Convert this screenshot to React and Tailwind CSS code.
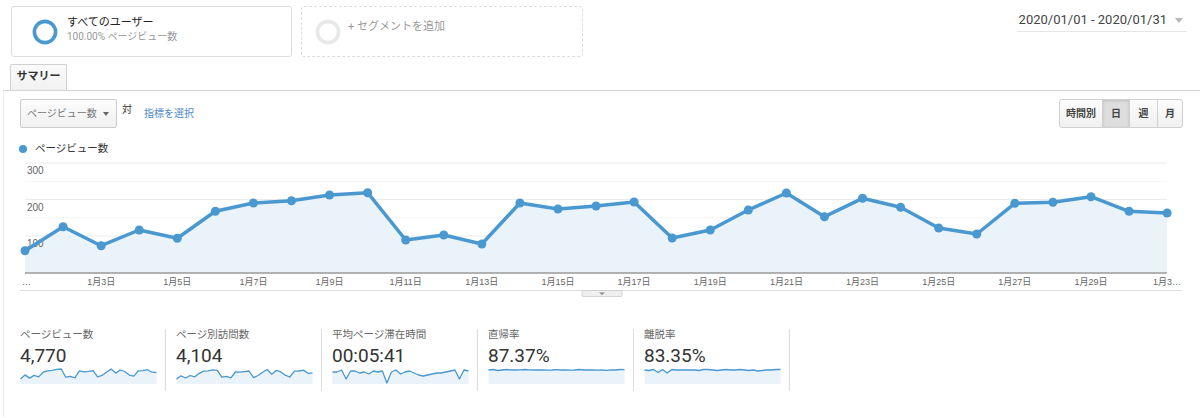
import React from 'react';

const BLUE = '#4a98d0';

const views = [
    251.7, 227.7, 246.7, 231, 239.3, 212.3, 204, 201.7, 196, 193.7, 241,
    236, 245, 204, 210, 207, 203, 239, 231, 211, 194, 217.7, 199.3, 208.3,
    229, 235, 204.3, 203.3, 197.7, 212.3, 214,
];

const dayX = (i) => 25 + i * 38.07;

// sparkline values = offset from top of a 17px box
const sparkViews = views.map((y) => 1 + (y - 193.7) / 5.8);
const sparkVisits = views.map((y, i) => 1.5 + (y - 193.7) / 6.2 + (i % 4 === 1 ? 0.8 : 0));
const sparkTime = [4, 4, 2, 11, 3, 3, 5, 4, 6, 3, 4, 3, 15, 4, 2, 6, 4, 3, 5, 7, 8, 7, 6, 5, 5, 4, 3, 2, 11, 2, 3];
const sparkDirect = [2, 1.5, 2.5, 2, 1.5, 2, 2, 1.8, 1.5, 1.8, 2, 1.8, 2, 2.2, 2, 1.7, 2, 2, 2.2, 2, 1.5, 2, 2, 1.8, 2.2, 2, 2.3, 1.8, 2, 1.5, 1.7];
const sparkBounce = [2, 2.5, 1.5, 4.5, 1.5, 5, 1.5, 2, 2, 2, 2, 2, 2.5, 1.5, 1.5, 2, 2.5, 2, 1.5, 2, 2, 1.5, 2, 2.5, 2, 3, 2.5, 2, 2, 1.5, 1.5];

const metrics = [
    { label: 'ページビュー数', value: '4,770', data: sparkViews },
    { label: 'ページ別訪問数', value: '4,104', data: sparkVisits },
    { label: '平均ページ滞在時間', value: '00:05:41', data: sparkTime },
    { label: '直帰率', value: '87.37%', data: sparkDirect },
    { label: '離脱率', value: '83.35%', data: sparkBounce },
];

function Sparkline({ data }) {
    const step = 136 / (data.length - 1);
    const pts = data.map((v, i) => `${(0.5 + i * step).toFixed(1)},${v.toFixed(1)}`);
    return (
        <svg width="137" height="17" className="block">
            <polygon points={`0.5,16 ${pts.join(' ')} 136.5,16`} fill="#eaf2fa" />
            <polyline points={pts.join(' ')} fill="none" stroke={BLUE} strokeWidth="1.3" strokeLinejoin="round" />
        </svg>
    );
}

function Chart() {
    const pts = views.map((y, i) => `${dayX(i).toFixed(1)},${y}`);
    const xLabels = [];
    for (let d = 3; d <= 29; d += 2) xLabels.push(d);
    return (
        <svg width="1196" height="142" viewBox="4 158 1196 142" className="block font-['Liberation_Sans','Noto_Sans_CJK_JP',sans-serif]">
            {[182.3, 218.8, 255.5].map((y) => (
                <line key={y} x1="25" x2="1167" y1={y} y2={y} stroke="#f4f4f4" />
            ))}
            {[164, 200.5, 237].map((y) => (
                <line key={y} x1="25" x2="1167" y1={y} y2={y} stroke="#ebebeb" />
            ))}
            <polygon points={`25,274 ${pts.join(' ')} 1167,274`} fill="#eaf2fa" />
            <line x1="25" x2="1167" y1="274" y2="274" stroke="#999" strokeWidth="1.5" />
            <text x="27" y="175.3" fontSize="10" fill="#666">300</text>
            <text x="27" y="211.6" fontSize="10" fill="#666">200</text>
            <text x="27" y="247.6" fontSize="10" fill="#666">100</text>
            <polyline points={pts.join(' ')} fill="none" stroke={BLUE} strokeWidth="3.5" strokeLinejoin="round" />
            {views.map((y, i) => (
                <circle key={i} cx={dayX(i)} cy={y} r="4.5" fill={BLUE} />
            ))}
            <text x="22" y="286" fontSize="9" fill="#666">…</text>
            {xLabels.map((d) => (
                <text key={d} x={dayX(d - 1)} y="286" fontSize="9" fill="#666" textAnchor="middle">
                    {`1月${d}日`}
                </text>
            ))}
            <text x="1167" y="286" fontSize="9" fill="#666" textAnchor="middle">1月3…</text>
            <line x1="20" x2="1182" y1="291.5" y2="291.5" stroke="#ddd" />
            <rect x="582" y="291.5" width="40" height="6" rx="1" fill="#efefef" stroke="#ccc" strokeWidth="0.8" />
            <path d="M599 293.5 L605 293.5 L602 296 Z" fill="#888" />
        </svg>
    );
}

function Ring({ color }) {
    return (
        <svg width="26" height="26" className="shrink-0">
            <circle cx="13" cy="13" r="10.6" fill="none" stroke={color} strokeWidth="3.6" />
        </svg>
    );
}

export default function App() {
    return (
        <div className="w-[1200px] h-[418px] bg-white overflow-hidden text-[#333] font-[Roboto,'Noto_Sans_CJK_JP',sans-serif]">
            {/* segment bar */}
            <div className="flex items-start h-[65px] pt-[6px] pl-[11px]">
                <div className="w-[281px] h-[51px] border border-[#ddd] rounded-[3px] flex items-center pl-[20px]">
                    <Ring color={BLUE} />
                    <div className="ml-[9px] mb-[4px]">
                        <div className="text-[11px] leading-[14px] text-[#222]">すべてのユーザー</div>
                        <div className="text-[10px] leading-[13px] text-[#999]">100.00% ページビュー数</div>
                    </div>
                </div>
                <div className="ml-[9px] w-[282px] h-[51px] border border-dashed border-[#ddd] rounded-[3px] flex items-center pl-[13px]">
                    <Ring color="#e8e8e8" />
                    <div className="ml-[7px] mb-[9px] text-[11px] text-[#999]">+ セグメントを追加</div>
                </div>
                <div className="ml-auto mr-[13px] mt-[5px] flex items-center border-b border-[#e6e6e6] pl-[2px] pr-[4px] pb-[2px]">
                    <span className="text-[13px] leading-[18px] text-[#444]">2020/01/01 - 2020/01/31</span>
                    <svg width="8" height="5" className="ml-[8px]">
                        <path d="M0 0 L8 0 L4 5 Z" fill="#b5b5b5" />
                    </svg>
                </div>
            </div>

            {/* tabs */}
            <div className="ml-[3px] h-[26px] border-b border-[#d5d5d5] pl-[7px] flex items-end">
                <div className="w-[57px] h-[26px] border border-b-0 border-[#d0d0d0] rounded-t-[2px] bg-gradient-to-b from-[#fafafa] to-[#f2f2f2] flex items-center justify-center text-[11px] font-bold text-[#333]">
                    サマリー
                </div>
            </div>

            {/* content */}
            <div className="ml-[3px] h-[326px] border-l border-[#ececec] pt-[8px]">
                <div className="flex items-start h-[29px] pl-[16px] pr-[17px] font-['Liberation_Sans','Noto_Sans_CJK_JP',sans-serif]">
                    <div className="w-[97px] h-[29px] border border-[#ccc] rounded-[2px] bg-gradient-to-b from-[#fdfdfd] to-[#f0f0f0] flex items-center pl-[6px] text-[10px] text-[#777]">
                        ページビュー数
                        <svg width="6" height="4" className="ml-auto mr-[7px]">
                            <path d="M0 0 L6 0 L3 4 Z" fill="#666" />
                        </svg>
                    </div>
                    <div className="ml-[5px] mt-[3px] text-[10px] text-[#333]">対</div>
                    <div className="ml-[12px] self-center text-[10px] text-[#4d86c6]">指標を選択</div>
                    <div className="ml-auto flex h-[29px] border border-[#d0d0d0] rounded-[3px] text-[10px] font-bold text-[#444] bg-gradient-to-b from-[#fdfdfd] to-[#f0f0f0]">
                        <div className="w-[42px] flex items-center justify-center">時間別</div>
                        <div className="w-[27px] flex items-center justify-center border-l border-[#d0d0d0] bg-[#dedede] shadow-[inset_0_1px_3px_rgba(0,0,0,0.15)]">日</div>
                        <div className="w-[28px] flex items-center justify-center border-l border-[#d0d0d0]">週</div>
                        <div className="w-[25px] flex items-center justify-center border-l border-[#d0d0d0]">月</div>
                    </div>
                </div>

                <div className="mt-[14px] h-[14px] flex items-center pl-[15px]">
                    <span className="w-[8px] h-[8px] rounded-full bg-[#4a98d0]" />
                    <span className="ml-[8px] text-[10.5px] text-[#333]">ページビュー数</span>
                </div>

                <div className="mt-[1px]">
                    <Chart />
                </div>

                <div className="mt-[30px] flex pl-[6px]">
                    {metrics.map((m) => (
                        <div key={m.label} className="w-[156px] h-[62px] border-r border-[#ddd] pl-[10px]">
                            <div className="text-[10.5px] leading-[12px] text-[#666]">{m.label}</div>
                            <div className="mt-[4px] text-[19px] leading-[22px] text-[#333]">{m.value}</div>
                            <div className="mt-[1px]">
                                <Sparkline data={m.data} />
                            </div>
                        </div>
                    ))}
                </div>
            </div>
        </div>
    );
}
